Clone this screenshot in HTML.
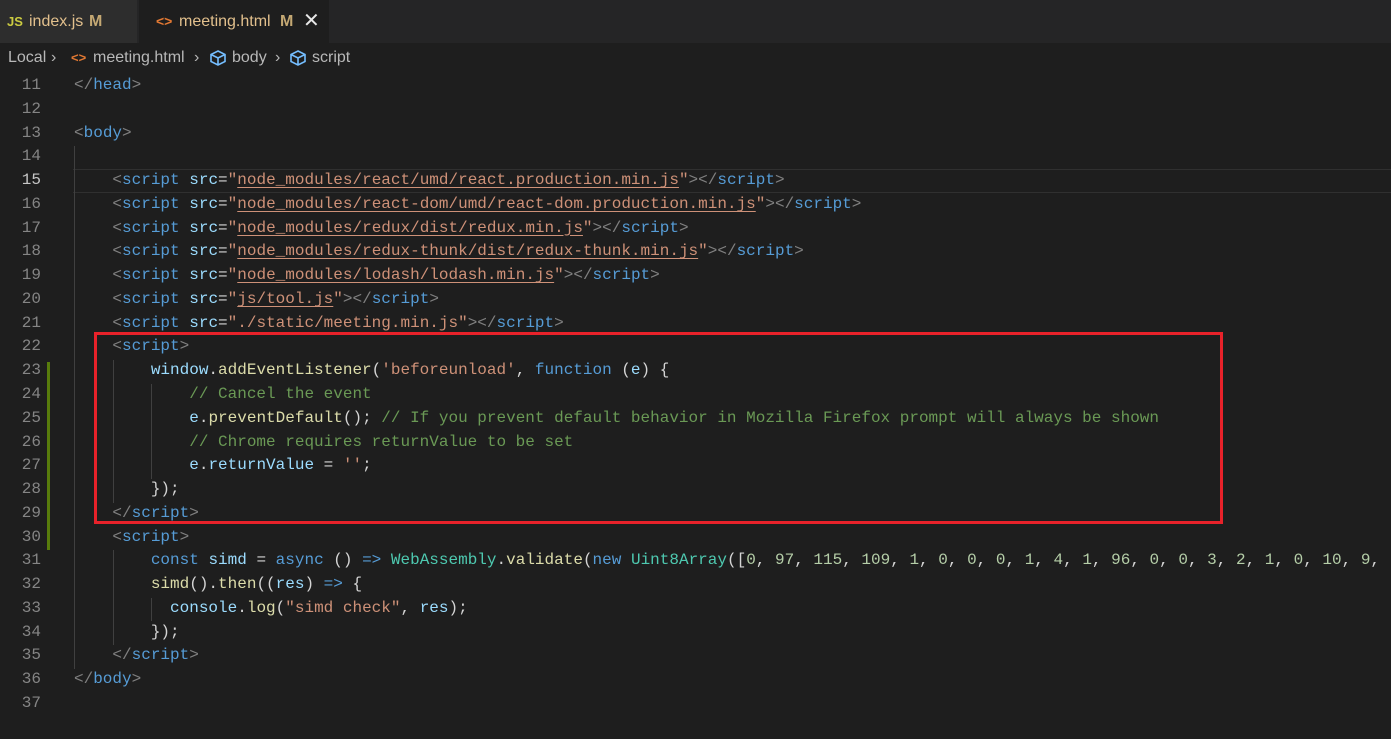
<!DOCTYPE html>
<html><head><meta charset="utf-8"><style>
*{margin:0;padding:0;box-sizing:border-box}
body{width:1391px;height:718px;background:#1e1e1e;overflow:hidden;position:relative;font-family:"Liberation Sans",sans-serif}
.tabs{position:absolute;left:0;top:0;width:1391px;height:43px;background:#252526}
.tab{position:absolute;top:0;height:43px;font-size:16px;color:#e2c08d;line-height:43px;white-space:nowrap}
.t1{left:0;width:137px;background:#2d2d2d}
.t2{left:139px;width:190px;background:#1e1e1e}
.bc{position:absolute;left:0;top:43px;height:29px;width:1391px;font-size:16px;color:#b8b8b8;line-height:29px;white-space:nowrap}
.code{position:absolute;left:0;top:74px;font-family:"Liberation Mono",monospace;font-size:16px;line-height:23.77px;white-space:pre}
.ln{position:absolute;left:0;width:41px;text-align:right;color:#858585;font-family:"Liberation Mono",monospace;font-size:16px}
.l{position:absolute;left:74px;height:23.77px}
.g{color:#808080}.t{color:#569cd6}.a{color:#9cdcfe}.s{color:#ce9178}.u{text-decoration:underline;text-underline-offset:3px}
.c{color:#6a9955}.f{color:#dcdcaa}.w{color:#d4d4d4}.k{color:#569cd6}.cl{color:#4ec9b0}.n{color:#b5cea8}
.guide{position:absolute;width:1px;background:#404040}
</style></head><body>
<div class="tabs">
<div class="tab t1"><span style="position:absolute;left:7px;color:#cbcb41;font-weight:bold;font-size:13px">JS</span><span style="position:absolute;left:29px">index.js</span><span style="position:absolute;left:89px;font-weight:bold;color:#c4a873">M</span></div>
<div class="tab t2"><span style="position:absolute;left:17px;color:#e37933;font-weight:bold;font-size:14px">&lt;&gt;</span><span style="position:absolute;left:40px">meeting.html</span><span style="position:absolute;left:141px;font-weight:bold;color:#c4a873">M</span><span style="position:absolute;left:164px;color:#e8e8e8;font-size:20px">✕</span></div>
</div>
<div class="bc"><span style="position:absolute;left:8px">Local</span><span style="position:absolute;left:51px">›</span><span style="position:absolute;left:71px;color:#e37933;font-weight:bold;font-size:13px">&lt;&gt;</span><span style="position:absolute;left:93px">meeting.html</span><span style="position:absolute;left:194px">›</span>
<svg style="position:absolute;left:209px;top:6px" width="18" height="18" viewBox="0 0 18 18" fill="none" stroke="#75beff" stroke-width="1.6"><path d="M9 2L16 5.5V12.5L9 16L2 12.5V5.5Z M2 5.5L9 9L16 5.5 M9 9V16"/></svg>
<span style="position:absolute;left:232px">body</span><span style="position:absolute;left:275px">›</span>
<svg style="position:absolute;left:289px;top:6px" width="18" height="18" viewBox="0 0 18 18" fill="none" stroke="#75beff" stroke-width="1.6"><path d="M9 2L16 5.5V12.5L9 16L2 12.5V5.5Z M2 5.5L9 9L16 5.5 M9 9V16"/></svg>
<span style="position:absolute;left:312px">script</span></div>
<div style="position:absolute;left:73px;top:169px;width:1318px;height:24px;border-top:1px solid #303030;border-bottom:1px solid #303030"></div>
<div class="guide" style="left:74px;top:146px;height:523px"></div>
<div class="guide" style="left:113px;top:360px;height:143px"></div>
<div class="guide" style="left:113px;top:550px;height:95px"></div>
<div class="guide" style="left:151px;top:384px;height:95px"></div>
<div class="guide" style="left:151px;top:598px;height:23px"></div>
<div style="position:absolute;left:47px;top:362px;width:3px;height:188px;background:#587c0c"></div>
<div class="code">
<div class="ln" style="top:0">11</div><div class="l" style="top:0"><span class="g">&lt;/</span><span class="t">head</span><span class="g">&gt;</span></div>
<div class="ln" style="top:23.77px">12</div>
<div class="ln" style="top:47.54px">13</div><div class="l" style="top:47.54px"><span class="g">&lt;</span><span class="t">body</span><span class="g">&gt;</span></div>
<div class="ln" style="top:71.31px">14</div>
<div class="ln" style="top:95.08px;color:#c6c6c6">15</div><div class="l" style="top:95.08px">    <span class="g">&lt;</span><span class="t">script</span> <span class="a">src</span><span class="w">=</span><span class="s">"<span class="u">node_modules/react/umd/react.production.min.js</span>"</span><span class="g">&gt;&lt;/</span><span class="t">script</span><span class="g">&gt;</span></div>
<div class="ln" style="top:118.85px">16</div><div class="l" style="top:118.85px">    <span class="g">&lt;</span><span class="t">script</span> <span class="a">src</span><span class="w">=</span><span class="s">"<span class="u">node_modules/react-dom/umd/react-dom.production.min.js</span>"</span><span class="g">&gt;&lt;/</span><span class="t">script</span><span class="g">&gt;</span></div>
<div class="ln" style="top:142.62px">17</div><div class="l" style="top:142.62px">    <span class="g">&lt;</span><span class="t">script</span> <span class="a">src</span><span class="w">=</span><span class="s">"<span class="u">node_modules/redux/dist/redux.min.js</span>"</span><span class="g">&gt;&lt;/</span><span class="t">script</span><span class="g">&gt;</span></div>
<div class="ln" style="top:166.39px">18</div><div class="l" style="top:166.39px">    <span class="g">&lt;</span><span class="t">script</span> <span class="a">src</span><span class="w">=</span><span class="s">"<span class="u">node_modules/redux-thunk/dist/redux-thunk.min.js</span>"</span><span class="g">&gt;&lt;/</span><span class="t">script</span><span class="g">&gt;</span></div>
<div class="ln" style="top:190.16px">19</div><div class="l" style="top:190.16px">    <span class="g">&lt;</span><span class="t">script</span> <span class="a">src</span><span class="w">=</span><span class="s">"<span class="u">node_modules/lodash/lodash.min.js</span>"</span><span class="g">&gt;&lt;/</span><span class="t">script</span><span class="g">&gt;</span></div>
<div class="ln" style="top:213.93px">20</div><div class="l" style="top:213.93px">    <span class="g">&lt;</span><span class="t">script</span> <span class="a">src</span><span class="w">=</span><span class="s">"<span class="u">js/tool.js</span>"</span><span class="g">&gt;&lt;/</span><span class="t">script</span><span class="g">&gt;</span></div>
<div class="ln" style="top:237.7px">21</div><div class="l" style="top:237.7px">    <span class="g">&lt;</span><span class="t">script</span> <span class="a">src</span><span class="w">=</span><span class="s">"./static/meeting.min.js"</span><span class="g">&gt;&lt;/</span><span class="t">script</span><span class="g">&gt;</span></div>
<div class="ln" style="top:261.47px">22</div><div class="l" style="top:261.47px">    <span class="g">&lt;</span><span class="t">script</span><span class="g">&gt;</span></div>
<div class="ln" style="top:285.24px">23</div><div class="l" style="top:285.24px">        <span class="a">window</span><span class="w">.</span><span class="f">addEventListener</span><span class="w">(</span><span class="s">'beforeunload'</span><span class="w">, </span><span class="k">function</span><span class="w"> (</span><span class="a">e</span><span class="w">) {</span></div>
<div class="ln" style="top:309.01px">24</div><div class="l" style="top:309.01px">            <span class="c">// Cancel the event</span></div>
<div class="ln" style="top:332.78px">25</div><div class="l" style="top:332.78px">            <span class="a">e</span><span class="w">.</span><span class="f">preventDefault</span><span class="w">(); </span><span class="c">// If you prevent default behavior in Mozilla Firefox prompt will always be shown</span></div>
<div class="ln" style="top:356.55px">26</div><div class="l" style="top:356.55px">            <span class="c">// Chrome requires returnValue to be set</span></div>
<div class="ln" style="top:380.32px">27</div><div class="l" style="top:380.32px">            <span class="a">e</span><span class="w">.</span><span class="a">returnValue</span><span class="w"> = </span><span class="s">''</span><span class="w">;</span></div>
<div class="ln" style="top:404.09px">28</div><div class="l" style="top:404.09px"><span class="w">        });</span></div>
<div class="ln" style="top:427.86px">29</div><div class="l" style="top:427.86px">    <span class="g">&lt;/</span><span class="t">script</span><span class="g">&gt;</span></div>
<div class="ln" style="top:451.63px">30</div><div class="l" style="top:451.63px">    <span class="g">&lt;</span><span class="t">script</span><span class="g">&gt;</span></div>
<div class="ln" style="top:475.4px">31</div><div class="l" style="top:475.4px">        <span class="k">const</span> <span class="a">simd</span><span class="w"> = </span><span class="k">async</span><span class="w"> () </span><span class="k">=&gt;</span> <span class="cl">WebAssembly</span><span class="w">.</span><span class="f">validate</span><span class="w">(</span><span class="k">new</span> <span class="cl">Uint8Array</span><span class="w">([</span><span class="n">0</span><span class="w">, </span><span class="n">97</span><span class="w">, </span><span class="n">115</span><span class="w">, </span><span class="n">109</span><span class="w">, </span><span class="n">1</span><span class="w">, </span><span class="n">0</span><span class="w">, </span><span class="n">0</span><span class="w">, </span><span class="n">0</span><span class="w">, </span><span class="n">1</span><span class="w">, </span><span class="n">4</span><span class="w">, </span><span class="n">1</span><span class="w">, </span><span class="n">96</span><span class="w">, </span><span class="n">0</span><span class="w">, </span><span class="n">0</span><span class="w">, </span><span class="n">3</span><span class="w">, </span><span class="n">2</span><span class="w">, </span><span class="n">1</span><span class="w">, </span><span class="n">0</span><span class="w">, </span><span class="n">10</span><span class="w">, </span><span class="n">9</span><span class="w">,</span></div>
<div class="ln" style="top:499.17px">32</div><div class="l" style="top:499.17px">        <span class="f">simd</span><span class="w">().</span><span class="f">then</span><span class="w">((</span><span class="a">res</span><span class="w">) </span><span class="k">=&gt;</span><span class="w"> {</span></div>
<div class="ln" style="top:522.94px">33</div><div class="l" style="top:522.94px">          <span class="a">console</span><span class="w">.</span><span class="f">log</span><span class="w">(</span><span class="s">"simd check"</span><span class="w">, </span><span class="a">res</span><span class="w">);</span></div>
<div class="ln" style="top:546.71px">34</div><div class="l" style="top:546.71px"><span class="w">        });</span></div>
<div class="ln" style="top:570.48px">35</div><div class="l" style="top:570.48px">    <span class="g">&lt;/</span><span class="t">script</span><span class="g">&gt;</span></div>
<div class="ln" style="top:594.25px">36</div><div class="l" style="top:594.25px"><span class="g">&lt;/</span><span class="t">body</span><span class="g">&gt;</span></div>
<div class="ln" style="top:618.02px">37</div>
</div>
<div style="position:absolute;left:94px;top:332px;width:1129px;height:192px;border:3px solid #e8222a"></div>
</body></html>
